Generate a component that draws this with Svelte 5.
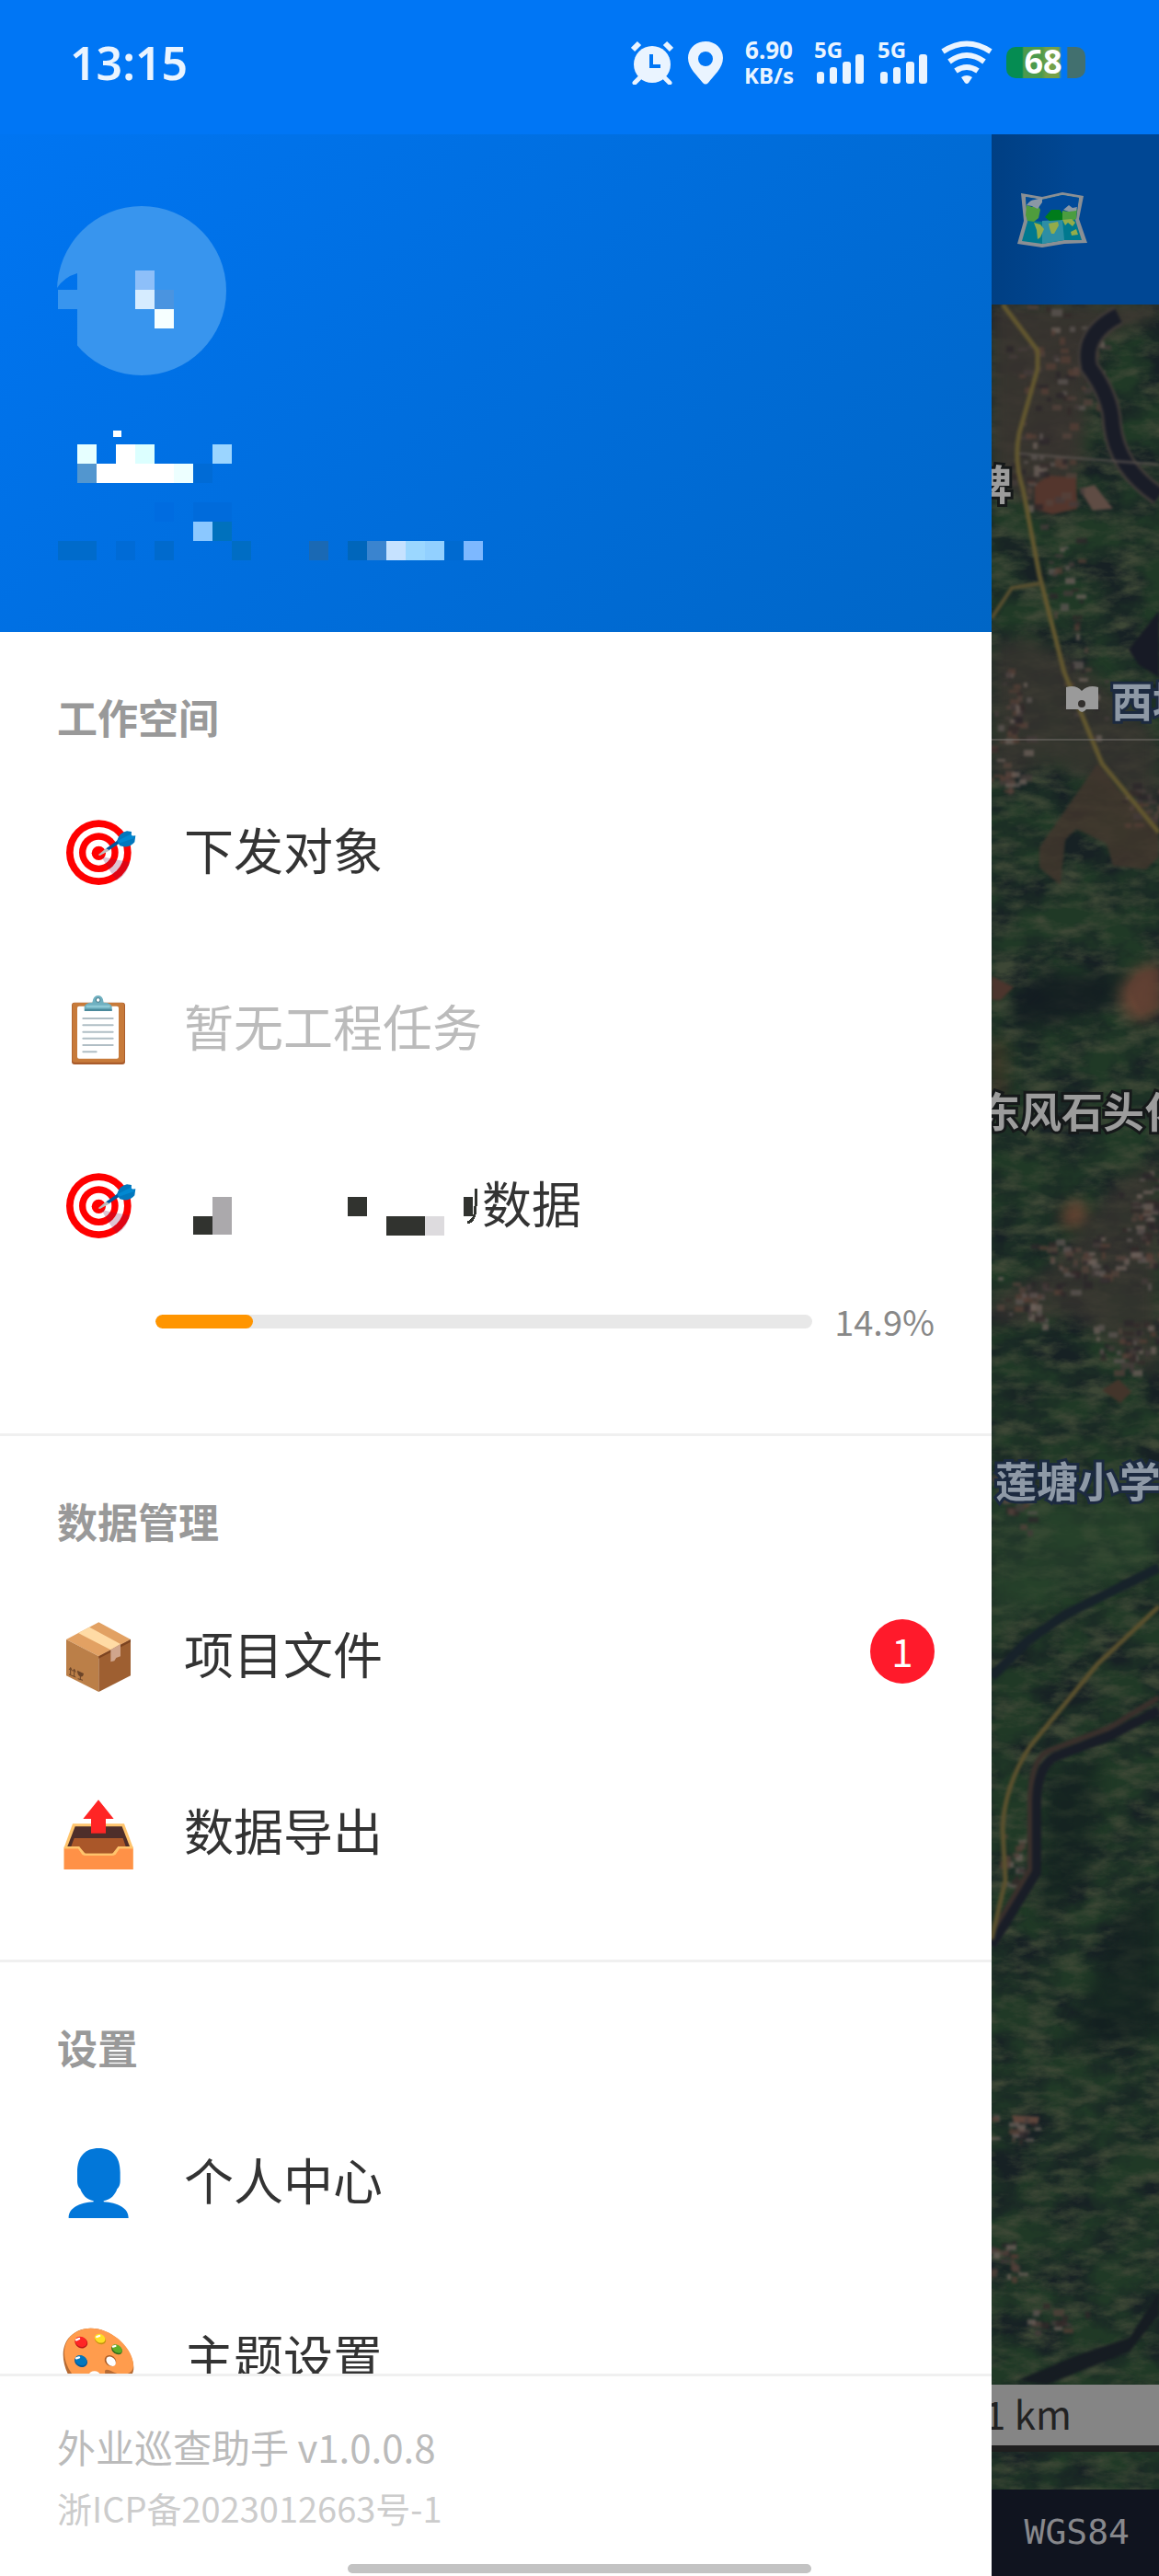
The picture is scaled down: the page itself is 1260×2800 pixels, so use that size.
<script lang="ts">
	interface MenuItem {
		icon: string;
		label: string;
		muted?: boolean;
		masked?: boolean;
		progress?: number;
		badge?: number;
	}

	interface MenuSection {
		title: string;
		items: MenuItem[];
	}

	const sections: MenuSection[] = [
		{
			title: '工作空间',
			items: [
				{ icon: 'target', label: '下发对象' },
				{ icon: 'clipboard', label: '暂无工程任务', muted: true },
				{ icon: 'target', label: '数据', masked: true, progress: 14.9 }
			]
		},
		{
			title: '数据管理',
			items: [
				{ icon: 'package', label: '项目文件', badge: 1 },
				{ icon: 'outbox', label: '数据导出' }
			]
		},
		{
			title: '设置',
			items: [
				{ icon: 'person', label: '个人中心' },
				{ icon: 'palette', label: '主题设置' }
			]
		}
	];

	// masked profile: [column, row, colour] on a 21px grid
	const cells: [number, number, string][] = [
		[0, 1, '#3895ee'], [4, 0, '#8dbff9'], [4, 1, '#d6ecff'], [5, 1, '#4a94e0'], [5, 2, '#f6ffff'],
		[1, 9, '#e6ffff'], [3, 9, '#ffffff'], [4, 9, '#dcffff'], [8, 9, '#9bd5ff'],
		[1, 10, '#5296cf'], [2, 10, '#ffffff'], [3, 10, '#ffffff'], [4, 10, '#ffffff'], [5, 10, '#ffffff'],
		[6, 10, '#edffff'], [7, 10, '#006bd6'], [5, 12, '#006ce0'], [7, 12, '#006bdb'], [8, 12, '#006bdb'],
		[7, 13, '#8bc8ff'], [8, 13, '#0071bd'],
		[0, 14, '#006bcb'], [1, 14, '#006bcb'], [3, 14, '#006bd6'], [5, 14, '#006acd'], [9, 14, '#006dc4'],
		[13, 14, '#1a69b4'], [15, 14, '#0066bb'], [16, 14, '#3a84cf'], [17, 14, '#c6e2ff'],
		[18, 14, '#9bd7ff'], [19, 14, '#92d0ff'], [20, 14, '#006ad0'], [21, 14, '#7db8ff']
	];

	// villages on the map: centre, spread and number of roofs
	const villages = [
		{ x: 70, y: 70, rx: 60, ry: 90, n: 60 },
		{ x: 50, y: 180, rx: 50, ry: 60, n: 40 },
		{ x: 80, y: 300, rx: 30, ry: 70, n: 26 },
		{ x: 20, y: 440, rx: 25, ry: 60, n: 44 },
		{ x: 15, y: 510, rx: 20, ry: 30, n: 20 },
		{ x: 105, y: 420, rx: 40, ry: 60, n: 20 },
		{ x: 160, y: 540, rx: 35, ry: 35, n: 30 },
		{ x: 165, y: 1000, rx: 28, ry: 70, n: 70 },
		{ x: 95, y: 1040, rx: 60, ry: 40, n: 60 },
		{ x: 40, y: 1080, rx: 40, ry: 30, n: 40 },
		{ x: 150, y: 1130, rx: 45, ry: 35, n: 50 },
		{ x: 20, y: 1300, rx: 24, ry: 40, n: 24 },
		{ x: 20, y: 1690, rx: 18, ry: 40, n: 16 },
		{ x: 20, y: 1985, rx: 35, ry: 20, n: 18 },
		{ x: 15, y: 2120, rx: 25, ry: 30, n: 20 },
		{ x: 70, y: 2190, rx: 40, ry: 18, n: 16 }
	];
	const roofColors = ['#5d5553', '#453c3b', '#6e625b', '#33292a', '#54433c', '#2b2629', '#553f36'];

	let seed = 7;
	function rand() {
		seed = (seed * 16807) % 2147483647;
		return seed / 2147483647;
	}

	const roofs = villages.flatMap((v) =>
		Array.from({ length: v.n }, () => ({
			x: Math.round(v.x + (rand() + rand() - 1) * v.rx),
			y: Math.round(v.y + (rand() + rand() - 1) * v.ry),
			w: 4 + Math.round(rand() * 8),
			h: 3 + Math.round(rand() * 5),
			fill: roofColors[Math.floor(rand() * roofColors.length)]
		}))
	);
</script>

{#snippet signal()}
	<svg class="signal" viewBox="0 0 54 48" aria-hidden="true">
		<text x="0" y="19">5G</text>
		<rect x="3" y="34" width="8" height="13" rx="3" />
		<rect x="17" y="29" width="8" height="18" rx="3" />
		<rect x="31" y="23" width="9" height="24" rx="3" />
		<rect x="45" y="15" width="9" height="32" rx="3" />
	</svg>
{/snippet}

{#snippet icon(name: string)}
	{#if name === 'target'}
		<svg class="icon" viewBox="66 417 270 270" aria-hidden="true">
			<circle cx="202" cy="560" r="106" fill="#ff0000" />
			<circle cx="202" cy="560" r="83" fill="#fff" />
			<circle cx="202" cy="560" r="64" fill="#ff0000" />
			<circle cx="202" cy="560" r="42" fill="#fff" />
			<circle cx="202" cy="562" r="23" fill="#ff0000" />
			<path d="M210 572L242 580L303 592Q294 634 260 651L232 610Z" fill="#7a1450" opacity="0.25" />
			<path d="M200 568L226 546L238 553L206 570Z" fill="#bdbdbd" />
			<path d="M226 547L264 520L269 530L236 552Z" fill="#01579b" />
			<path d="M261 523Q270 494 294 490L309 492L308 506L322 505L319 526Q302 548 271 538Z" fill="#0277bd" />
			<path d="M264 521L306 500L314 508L320 512L268 530Z" fill="#0288d1" />
		</svg>
	{:else if name === 'clipboard'}
		<svg class="icon" viewBox="66 993 270 270" aria-hidden="true">
			<rect x="114" y="1049" width="174" height="202" rx="9" fill="#a95c2c" />
			<rect x="116" y="1050" width="169" height="194" rx="8" fill="#c77a3a" />
			<rect x="132" y="1061" width="135" height="171" rx="6" fill="#fff" />
			<path d="M151 1101H248M151 1123H248M151 1145H248M151 1166H248M151 1188H248M151 1210H194" stroke="#b0bec5" stroke-width="6" stroke-linecap="round" />
			<path d="M155 1077V1063Q158 1049 181 1049Q184 1026 200 1026Q216 1026 218 1049Q242 1049 245 1063V1077Z" fill="#6fb0c0" />
			<path d="M156 1070H245V1077H156Z" fill="#4a899b" />
			<path d="M164 1062H236" stroke="#8ecad6" stroke-width="7" stroke-linecap="round" />
			<circle cx="200" cy="1041" r="7" fill="#fff" stroke="#427687" stroke-width="3" />
		</svg>
	{:else if name === 'package'}
		<svg class="icon" viewBox="66 399 270 270" aria-hidden="true">
			<path d="M202 430L306 486L202 541L96 486Z" fill="#e2a163" />
			<path d="M96 486L202 541V657L96 604Z" fill="#bb7f48" />
			<path d="M306 486L202 541V657L306 604Z" fill="#9e5f31" />
			<path d="M306 486L202 541V548L306 494Z" fill="#7d4420" />
			<path d="M135 465L172 446L273 501L241 520Z" fill="#ffdba5" />
			<path d="M241 520L273 501V541L259 546L253 556L241 559Z" fill="#d0a58c" />
			<path d="M105 600L127 609M110 600V578L105 585M110 578L115 588M122 606V583L117 590M122 583L127 593M134 614L150 619M142 616V604" stroke="#6b4428" stroke-width="3" fill="none" />
			<path d="M132 587L153 597Q151 610 142 607Q132 602 132 587Z" fill="#6b4428" />
		</svg>
	{:else if name === 'outbox'}
		<svg class="icon" viewBox="66 975 270 270" aria-hidden="true">
			<path d="M117 1087H285L314 1165V1236H89V1165Z" fill="#ffc46c" />
			<path d="M125 1096H278L303 1161H100Z" fill="#4e2e2a" />
			<path d="M122 1134H281L290 1161H265L247 1184H158L138 1161H112Z" fill="#aa5729" />
			<path d="M89 1168H135L148 1187Q151 1190 158 1190H246Q253 1190 257 1187L270 1168H314V1236H89Z" fill="#ff9147" />
			<path d="M89 1165H137L150 1183Q152 1186 158 1187H246Q252 1186 254 1183L268 1165H314" fill="none" stroke="#ffc46c" stroke-width="6" />
			<path d="M201 1009L251 1071H225V1118H177V1071H151Z" fill="#ff2525" />
		</svg>
	{:else if name === 'person'}
		<svg class="icon" viewBox="66 405 270 270" aria-hidden="true">
			<path d="M202 435C245 435 272 460 272 514V540C272 555 268 562 262 568C255 588 242 602 218 607V610C262 612 300 630 299 663H104C103 630 140 612 185 610V607C162 602 149 588 142 568C136 562 132 555 132 540V514C132 460 159 435 202 435Z" fill="#0277d9" />
		</svg>
	{:else}
		<svg class="icon" viewBox="66 981 270 270" aria-hidden="true">
			<path d="M86 1108C86 1052 130 1022 176 1022C250 1022 316 1096 316 1150C316 1180 296 1192 262 1186C236 1180 220 1196 226 1216C230 1240 190 1246 160 1232C116 1210 86 1158 86 1108Z" fill="#b76b33" />
			<path d="M90 1102C90 1050 132 1022 176 1022C250 1022 316 1092 315 1144C314 1170 290 1176 262 1170C238 1160 222 1150 222 1164C226 1190 222 1220 190 1218C140 1214 90 1156 90 1102Z" fill="#ff9c4d" />
			<ellipse cx="145" cy="1069" rx="21" ry="18" transform="rotate(25 145 1069)" fill="#b91719" />
			<ellipse cx="144" cy="1066" rx="20" ry="16" transform="rotate(25 144 1066)" fill="#ff2525" />
			<ellipse cx="207" cy="1059" rx="19" ry="15" transform="rotate(25 207 1059)" fill="#c79313" />
			<ellipse cx="206" cy="1055" rx="18" ry="14" transform="rotate(25 206 1055)" fill="#ffdf25" />
			<ellipse cx="261" cy="1092" rx="19" ry="14" transform="rotate(35 261 1092)" fill="#33691e" />
			<ellipse cx="262" cy="1089" rx="18" ry="12" transform="rotate(35 262 1089)" fill="#5fad28" />
			<ellipse cx="144" cy="1130" rx="22" ry="18" transform="rotate(30 144 1130)" fill="#01579b" />
			<ellipse cx="144" cy="1127" rx="20" ry="16" transform="rotate(30 144 1127)" fill="#0277bd" />
			<ellipse cx="240" cy="1128" rx="20" ry="17" transform="rotate(40 240 1128)" fill="#a85c28" />
			<ellipse cx="242" cy="1130" rx="18" ry="13" transform="rotate(45 242 1130)" fill="#fff" />
			<ellipse cx="188" cy="1175" rx="18" ry="13" fill="#fff" />
			<path d="M129 1060L138 1056M196 1050L204 1047M249 1082L256 1080M129 1120L138 1117" stroke="#fff" stroke-width="7" stroke-linecap="round" />
		</svg>
	{/if}
{/snippet}

<div class="screen">
	<header class="status">
		<time>13:15</time>
		<div class="status-icons">
			<svg class="alarm" viewBox="0 0 46 48" aria-hidden="true">
				<path d="M9 41L4 46M37 41L42 46" stroke="#eaf4ff" stroke-width="5" stroke-linecap="round" />
				<path d="M2 10L9 3M44 10L37 3" stroke="#eaf4ff" stroke-width="6" />
				<circle cx="23" cy="26" r="20" fill="#eaf4ff" />
				<path d="M22 15V28H32" fill="none" stroke="#0076f5" stroke-width="4" />
			</svg>
			<svg class="pin" viewBox="0 0 40 48" aria-hidden="true">
				<path fill-rule="evenodd" d="M20 1C9 1 1 9 1 19C1 30 11 38 17 46Q20 49 23 46C29 38 39 30 39 19C39 9 31 1 20 1ZM20 12A8 8 0 1 1 20 28A8 8 0 1 1 20 12Z" fill="#eaf4ff" />
			</svg>
			<div class="speed">
				<span>6.90</span>
				<span class="unit">KB/s</span>
			</div>
			{@render signal()}
			{@render signal()}
			<svg class="wifi" viewBox="0 0 56 48" aria-hidden="true">
				<path d="M2 12Q28 -5 54 12M9 23Q28 9 47 23M16 33Q28 25 40 33" fill="none" stroke="#eaf4ff" stroke-width="6" />
				<path d="M22 40Q28 36 34 40L30 46Q28 48 26 46Z" fill="#eaf4ff" />
			</svg>
			<span class="battery">68</span>
		</div>
	</header>

	<div class="body">
		<aside class="drawer">
			<div class="profile">
				<svg viewBox="0 0 464 420" role="img" aria-label="用户">
					<clipPath id="avatar-clip">
						<path d="M0 0H185V185H22V74Q8 78 0 90Z" />
					</clipPath>
					<circle cx="92" cy="93" r="92" fill="#3895ee" clip-path="url(#avatar-clip)" />
					{#each cells as [col, row, fill]}
						<rect x={1 + col * 21} y={71 + row * 21} width="21" height="21" {fill} shape-rendering="crispEdges" />
					{/each}
					<rect x="61" y="245" width="9" height="7" fill="#fff" />
				</svg>
			</div>

			<nav>
				{#each sections as section}
					<section>
						<h2>{section.title}</h2>
						{#each section.items as item}
							<button class="item" class:muted={item.muted} type="button">
								{@render icon(item.icon)}
								<span class="label">
									{#if item.masked}
										<svg class="mask" viewBox="0 0 324 54" aria-hidden="true" shape-rendering="crispEdges">
											<path d="M10 43H31V63H10ZM178 22H199V43H178ZM220 43H262V64H220Z" fill="#31332f" />
											<path d="M31 22H52V63H31Z" fill="#aba9ac" />
											<path d="M262 43H283V64H262Z" fill="#dddbde" />
											<path d="M304 22H314V43H304Z" fill="#31332f" />
											<path d="M317 13V32Q317 48 308 50" fill="none" stroke="#31332f" stroke-width="3" />
										</svg>
									{/if}
									{item.label}
								</span>
								{#if item.badge}
									<span class="badge">{item.badge}</span>
								{/if}
							</button>
							{#if item.progress}
								<div class="progress">
									<div class="track">
										<div class="fill" style="width: {item.progress}%"></div>
									</div>
									<span>{item.progress}%</span>
								</div>
							{/if}
						{/each}
					</section>
				{/each}
			</nav>

			<footer>
				<p class="version">外业巡查助手 v1.0.0.8</p>
				<p class="icp">浙ICP备2023012663号-1</p>
			</footer>
		</aside>

		<main class="page">
			<div class="topbar">
				<svg class="world" viewBox="24 196 84 84" aria-hidden="true">
					<path d="M32 209L55 213L77 208L100 212L95 237L104 263L79 264L55 268L28 264L35 239Z" fill="#8a8f94" />
					<path d="M37 213L55 216L77 211L95 214L91 238L98 260L79 260L55 264L33 261L39 240Z" fill="#00798f" />
					<path d="M37 213L55 216L77 211L95 214L92 237L77 238L57 240L39 239Z" fill="#004a9a" />
					<path d="M55 239L77 238L79 260L55 264Z" fill="#2d8ea5" />
					<path d="M38 222L44 224L49 220L53 227L51 236L46 240L39 239L37 233Z" fill="#4f9c3d" />
					<path d="M58 235L65 227L74 227L77 231V238L63 239Z" fill="#007c1b" />
					<path d="M77 228L84 229L93 226L92 237L84 240L77 238Z" fill="#4b9d40" />
					<path d="M38 222Q42 216 47 216L55 214V219L50 226L44 223ZM78 227L84 222L88 225L93 224L92 228L84 229Z" fill="#8b98a5" />
					<path d="M46 241L53 243L57 248L53 257L50 259L49 249ZM62 242L72 240L73 244L68 253H65L63 247ZM77 238L87 237L91 241L88 245L83 241L80 244ZM86 251L92 248L94 254L87 255Z" fill="#93ac4a" />
				</svg>
			</div>
			<div class="map">
				<svg class="terrain" viewBox="0 0 182 2375" preserveAspectRatio="xMinYMin slice" aria-hidden="true">
					<defs>
						<filter id="forest" x="0" y="0" width="100%" height="100%" color-interpolation-filters="sRGB">
							<feTurbulence type="fractalNoise" baseFrequency="0.018 0.026" numOctaves="5" seed="4" />
							<feColorMatrix values="0 0 0 0 0.09  0 0 0 0 0.13  0 0 0 0 0.14  2.6 0 0 0 -0.9" />
						</filter>
						<filter id="field" x="0" y="0" width="100%" height="100%" color-interpolation-filters="sRGB">
							<feTurbulence type="fractalNoise" baseFrequency="0.03 0.07" numOctaves="5" seed="11" />
							<feColorMatrix values="0 0 0 0 0.24  0 0 0 0 0.28  0 0 0 0 0.21  0 2.4 0 0 -1" />
						</filter>
						<filter id="soft" color-interpolation-filters="sRGB">
							<feGaussianBlur stdDeviation="1.4" />
						</filter>
						<filter id="haze" x="-30%" y="-30%" width="160%" height="160%" color-interpolation-filters="sRGB">
							<feGaussianBlur stdDeviation="8" />
						</filter>
					</defs>
					<rect width="182" height="2375" fill="#203926" />
					<rect width="182" height="2375" filter="url(#forest)" />
					<rect width="182" height="2375" filter="url(#field)" />
					<g filter="url(#haze)">
						<path d="M0 0H182V14L110 40L100 170L60 230L0 190Z" fill="#3b3430" opacity="0.85" />
						<path d="M0 370L40 360L110 400L182 470V560L120 520L60 500L0 520Z" fill="#3a3430" opacity="0.75" />
						<path d="M182 930L140 950L60 1050L0 1080V1110L90 1100L182 1170Z" fill="#3a3431" opacity="0.7" />
						<path d="M20 760L60 725L150 730L120 770L30 790Z" fill="#131b20" opacity="0.8" />
						<path d="M182 1725L140 1750L80 1900L182 1880Z" fill="#12211f" opacity="0.7" />
						<path d="M60 1600L120 1580L110 1700L50 1760Z" fill="#14251f" opacity="0.6" />
						<path d="M0 1300H182V1370L0 1440Z" fill="#2c4a2d" opacity="0.5" />
						<path d="M140 745L158 722L182 716V770L160 780L142 765Z" fill="#6b4636" />
						<path d="M75 990L88 974L104 980L100 998L80 1004Z" fill="#6b4433" />
						<path d="M0 800H16V870H0Z" fill="#463626" opacity="0.7" />
					</g>
					<g filter="url(#soft)">
						<path d="M115 499L52 590V612L75 631L80 582L92 570L125 586L132 610L168 614L182 600V560L140 530Z" fill="#42362d" opacity="0.8" />
						<path d="M148 742L158 728L182 722V764L162 770Z" fill="#5c3d32" opacity="0.6" />
						<path d="M47 196L62 186L92 188L93 222L66 228L47 222Z" fill="#54362d" />
						<path d="M95 200L112 196L132 222L110 224Z" fill="#5f4c44" />
						<path d="M0 730L24 742L10 756H0Z" fill="#4c352d" />
						<path d="M22 1968L52 1970L50 1978L24 1976Z" fill="#5f463c" />
						<path d="M120 1180L138 1168L152 1182L140 1194Z" fill="#43352b" />
						{#each roofs as r}
							<rect x={r.x} y={r.y} width={r.w} height={r.h} fill={r.fill} opacity="0.75" />
						{/each}
						<path d="M138 12Q98 32 106 68Q130 100 131 130Q136 178 182 208" fill="none" stroke="#403b38" stroke-width="22" />
						<path d="M138 12Q98 32 106 68Q130 100 131 130Q136 178 182 208" fill="none" stroke="#191c27" stroke-width="16" />
						<path d="M182 333L149 375L160 392L182 405Z" fill="#171a25" />
						<path d="M0 1492L40 1452L80 1424L182 1373" fill="none" stroke="#17222a" stroke-width="10" />
						<path d="M182 1514L128 1547L62 1572Q42 1582 42 1627V1700L0 1772" fill="none" stroke="#3a302c" stroke-width="6" />
						<path d="M182 1528L128 1556L68 1579Q50 1590 49 1627V1704L0 1784" fill="none" stroke="#191d27" stroke-width="10" />
						<path d="M30 2256L90 2230L150 2210L182 2160V2185L150 2225L60 2261Z" fill="#161c22" />
						<path d="M12 0L50 50V70L30 140Q24 170 34 200L52 294L79 400L120 499L182 574" fill="none" stroke="#62572f" stroke-width="5" />
						<path d="M0 341L22 308L54 303" fill="none" stroke="#5a5030" stroke-width="4" />
						<path d="M182 1415L115 1478L42 1567Q14 1610 12 1656L15 1713L0 1777" fill="none" stroke="#5b512e" stroke-width="5" />
						<path d="M30 162L182 174" stroke="#5b5450" stroke-width="2" />
					</g>
					<path d="M0 473H182" stroke="#77736f" stroke-width="1" />
					<path d="M81 416Q92 413 98 420Q105 413 116 416V440H103Q98 446 94 440H81Z" fill="#9a9a9a" />
					<circle cx="98" cy="434" r="4" fill="#33302e" />
					<g class="place">
						<text x="-23" y="213">碑</text>
						<text x="-14" y="895">东风石头化</text>
					</g>
					<g class="place school">
						<text x="130" y="449">西坑</text>
						<text x="4" y="1297">莲塘小学</text>
					</g>
				</svg>
				<div class="scale">1 km</div>
			</div>
			<div class="coords">WGS84</div>
		</main>
	</div>

	<div class="home-bar"></div>
</div>

<style>
	:global(body) {
		margin: 0;
	}

	.screen {
		position: relative;
		display: flex;
		flex-direction: column;
		height: 100vh;
		overflow: hidden;
		background: #fff;
		font-family: 'Noto Sans CJK SC', sans-serif;
	}

	.status {
		display: flex;
		align-items: center;
		justify-content: space-between;
		flex-shrink: 0;
		height: 136px;
		padding: 0 80px 10px 76px;
		background: #0076f5;
		color: #eaf4ff;
		font-family: 'Noto Sans', sans-serif;
	}

	time {
		font-size: 50px;
		font-weight: 600;
	}

	.status-icons {
		display: flex;
		align-items: center;
		gap: 15px;
	}

	.alarm {
		width: 46px;
		height: 48px;
	}

	.pin {
		width: 40px;
		height: 48px;
	}

	.speed {
		display: flex;
		flex-direction: column;
		align-items: center;
		width: 68px;
		font-size: 26px;
		font-weight: 700;
		line-height: 28px;
	}

	.unit {
		font-size: 24px;
	}

	.signal {
		width: 54px;
		height: 48px;
		overflow: visible;
		fill: #eaf4ff;
	}

	.wifi {
		width: 56px;
		height: 48px;
	}

	.signal text {
		font-size: 24px;
		font-weight: 700;
	}

	.battery {
		width: 86px;
		height: 34px;
		border-radius: 10px;
		background: linear-gradient(90deg, #058c52 0 20%, #4c9a4d 22% 45%, #74a048 50% 66%, #0076f5 70% 76%, #42706f 78%);
		color: #fff;
		font-size: 36px;
		font-weight: 700;
		line-height: 32px;
		text-align: center;
		text-indent: -6px;
	}

	.body {
		display: flex;
		flex: 1;
		min-height: 0;
	}

	.drawer {
		display: flex;
		flex: 1;
		flex-direction: column;
		min-width: 0;
		background: #fff;
	}

	.profile {
		flex-shrink: 0;
		padding: 77px 62px 44px;
		background: linear-gradient(135deg, #0075f2, #0066c6);
	}

	.profile svg {
		display: block;
		width: 464px;
		height: 420px;
	}

	nav {
		flex: 1;
		min-height: 0;
		overflow-y: auto;
		scrollbar-width: none;
	}

	section {
		padding: 62px 0 44px;
		border-bottom: 3px solid #f0f0f0;
	}

	h2 {
		margin: 0 62px 19px;
		color: #999;
		font-size: 44px;
		font-weight: 700;
		line-height: 60px;
	}

	.item {
		display: flex;
		align-items: center;
		gap: 48px;
		width: 100%;
		height: 192px;
		padding: 0 62px;
		border: 0;
		background: none;
		color: #333;
		font-family: inherit;
		font-size: 54px;
		text-align: left;
	}

	.item.muted {
		color: #bbb;
	}

	.icon {
		flex-shrink: 0;
		width: 90px;
		height: 90px;
	}

	.label {
		display: flex;
		flex: 1;
		align-items: center;
		padding-bottom: 4px;
	}

	.mask {
		width: 324px;
		height: 54px;
		overflow: visible;
	}

	.badge {
		width: 70px;
		height: 70px;
		margin-bottom: 6px;
		border-radius: 35px;
		background: #ff1a2b;
		color: #fff;
		font-size: 42px;
		line-height: 68px;
		text-align: center;
	}

	.progress {
		display: flex;
		align-items: center;
		gap: 24px;
		padding: 0 62px 46px 169px;
		color: #888;
		font-size: 38px;
		line-height: 64px;
	}

	.track {
		flex: 1;
		height: 15px;
		overflow: hidden;
		border-radius: 8px;
		background: #e8e8e8;
	}

	.fill {
		height: 100%;
		border-radius: 8px;
		background: #ff9500;
	}

	footer {
		flex-shrink: 0;
		padding: 44px 62px;
		border-top: 3px solid #f0f0f0;
	}

	footer p {
		margin: 0;
	}

	.version {
		color: #bbb;
		font-size: 42px;
		line-height: 64px;
	}

	.icp {
		margin-top: 5px;
		color: #ccc;
		font-size: 38px;
		line-height: 60px;
	}

	.page {
		display: flex;
		flex-direction: column;
		width: 182px;
		background: #10141f;
	}

	.topbar {
		display: flex;
		align-items: center;
		height: 185px;
		padding-left: 24px;
		background: linear-gradient(90deg, #003f83, #004794 50%);
	}

	.world {
		width: 84px;
		height: 84px;
	}

	.map {
		position: relative;
		flex: 1;
		min-height: 0;
		overflow: hidden;
	}

	.terrain {
		display: block;
		width: 100%;
		height: 100%;
	}

	.place text {
		fill: #9c9c9c;
		stroke: #16191a;
		stroke-width: 6px;
		paint-order: stroke;
		font-size: 45px;
		font-weight: 700;
	}

	.school text {
		fill: #8e99a6;
		stroke: #1c2a40;
	}

	.scale {
		position: absolute;
		right: 0;
		bottom: 41px;
		left: 0;
		height: 66px;
		border-bottom: 7px solid #1f1f1f;
		background: #858585;
		color: #222;
		font-size: 42px;
		line-height: 62px;
		text-indent: -8px;
	}

	.coords {
		height: 94px;
		padding-right: 32px;
		background: #10141f;
		color: #87888c;
		font-family: 'DejaVu Sans Mono', monospace;
		font-size: 38px;
		line-height: 92px;
		text-align: right;
	}

	.home-bar {
		position: absolute;
		bottom: 3px;
		left: 30%;
		width: 40%;
		height: 10px;
		border-radius: 5px;
		background: #c3c3c3;
	}
</style>
